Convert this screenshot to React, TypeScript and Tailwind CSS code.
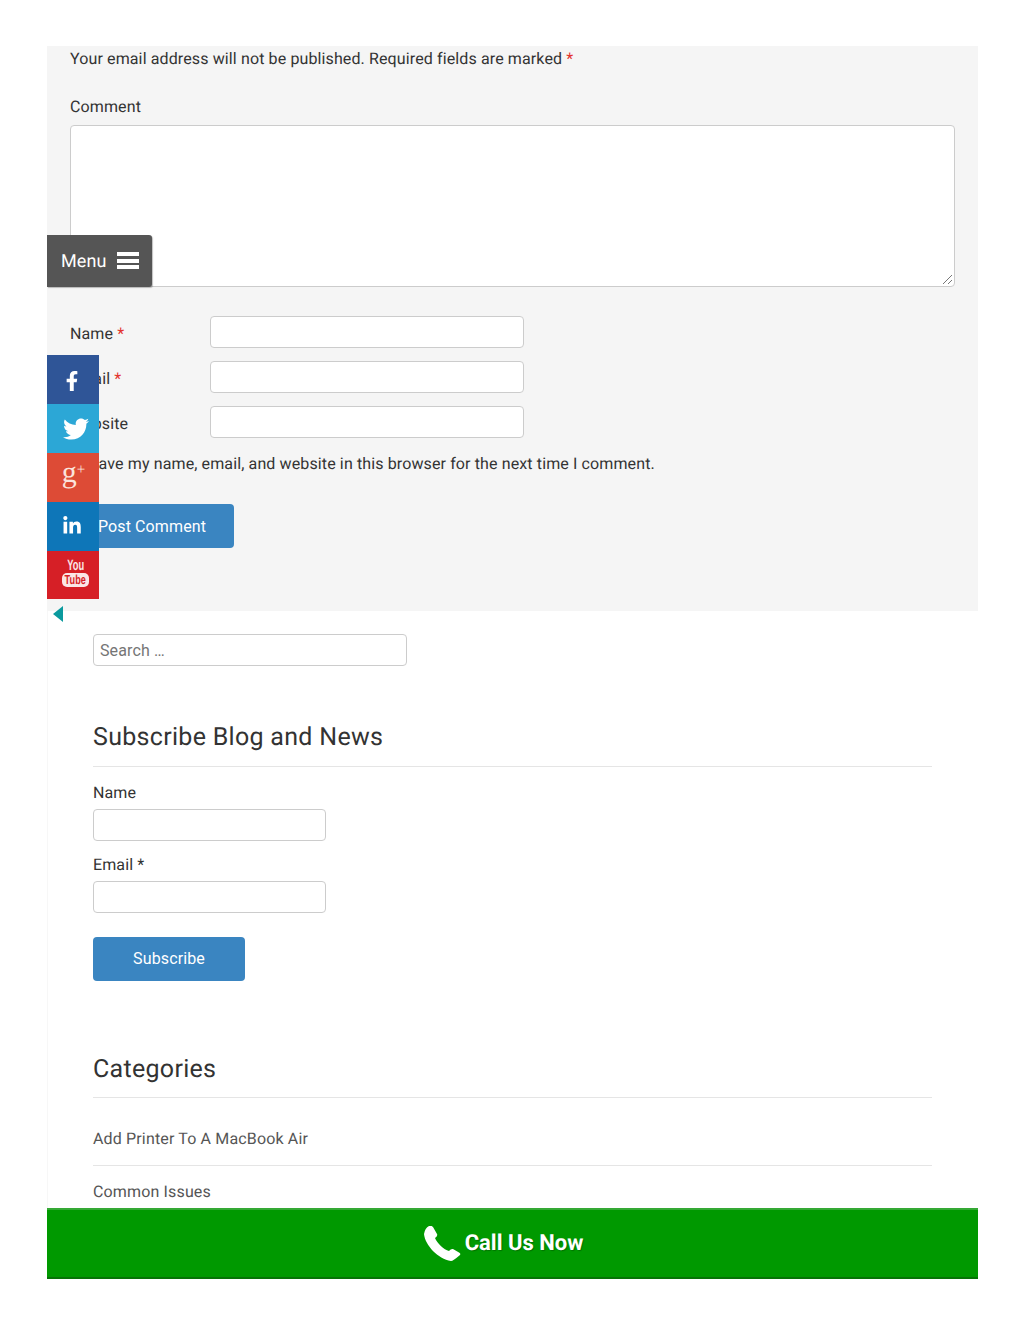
import { FaFacebookF, FaLinkedinIn, FaTwitter } from 'react-icons/fa'

const fieldClass = 'block h-8 rounded-[4px] border border-[#ccc] bg-white'

function Required() {
  return <span className="text-[#e3342f]">*</span>
}

function CommentRow({ label, top }: { label: React.ReactNode; top: string }) {
  return (
    <div className={`flex items-center ${top}`}>
      <label className="w-[140px] pt-[3px]">{label}</label>
      <input className={`${fieldClass} w-[314px]`} />
    </div>
  )
}

function SocialBar() {
  return (
    <div className="absolute left-[47px] top-[355px] w-[52px] text-white">
      <div className="flex h-[49px] items-center justify-center bg-[#2f5597] pr-[3px] pt-[2px] text-[20px]">
        <FaFacebookF />
      </div>
      <div className="flex h-[49px] items-center justify-center bg-[#2ca7d6] pl-[5px] text-[26px]">
        <FaTwitter />
      </div>
      <div className="flex h-[49px] items-start justify-center bg-[#dd4b36] pl-px font-['Liberation_Serif',serif] text-[#fbe3dc]">
        <span className="mt-[4px] text-[30px] leading-[32px]">g</span>
        <span className="mt-[7px] text-[15px] leading-[20px]">+</span>
      </div>
      <div className="flex h-[49px] items-center justify-center bg-[#0e76b8] pb-px pr-[2px] text-[20px]">
        <FaLinkedinIn />
      </div>
      <div className="flex h-[48px] flex-col items-center justify-center bg-[#d61f26] pb-[5px] pl-[5px] font-['Liberation_Sans',sans-serif] font-bold">
        <span className="scale-x-[0.62] text-[15px] leading-[14px] text-[#fbe6e6]">You</span>
        <span className="flex h-[14px] w-[27px] items-center justify-center rounded-[5px] bg-[#fbe6e6] text-[13px] text-[#d61f26]">
          <span className="scale-x-[0.7]">Tube</span>
        </span>
      </div>
      <svg className="ml-[6px] mt-[7px] h-4 w-[10px]" viewBox="0 0 10 16">
        <path d="M10 0v16L0 8z" fill="#0b9a9e" />
      </svg>
    </div>
  )
}

export default function App() {
  return (
    <div className="relative h-[1325px] overflow-hidden bg-white font-['Roboto',sans-serif] text-base tracking-[0.12px] text-[#333] [text-rendering:geometricPrecision]">
      <div className="absolute left-[47px] top-[611px] h-[600px] w-px bg-[#f7f7f7]" />
      <div className="mx-[46px] pt-[46px] pl-px">
        <section className="h-[565px] bg-[#f5f5f5] pl-[23px] pr-[23px]">
          <p className="pt-px leading-6">
            Your email address will not be published. Required fields are marked <Required />
          </p>
          <label className="mt-6 block leading-6">Comment</label>
          <div className="relative mt-[6px] h-[162px] rounded-[4px] border border-[#ccc] bg-white">
            <svg className="absolute bottom-[1px] right-[1px] h-[11px] w-[11px]" viewBox="0 0 11 11">
              <path d="M1 10 10 1M6 10l4-4" stroke="#777" strokeWidth="1" fill="none" />
            </svg>
          </div>
          <CommentRow label={<>Name <Required /></>} top="mt-[29px]" />
          <CommentRow label={<>Email <Required /></>} top="mt-[13px]" />
          <CommentRow label="Website" top="mt-[13px]" />
          <div className="mt-[13px] flex items-center gap-[6px] leading-6">
            <input type="checkbox" className="h-[13px] w-[13px]" />
            <span className="pt-px">Save my name, email, and website in this browser for the next time I comment.</span>
          </div>
          <button className="mt-[28px] block h-11 w-[164px] rounded-[4px] bg-[#3a85c1] pt-px text-white">
            Post Comment
          </button>
        </section>

        <section className="px-[46px]">
          <input
            placeholder="Search …"
            className="mt-[23px] block h-8 w-[314px] rounded-[4px] border border-[#ccc] bg-white px-1.5 placeholder:text-[#757575]"
          />
          <h2 className="mt-[54px] border-b border-[#e5e5e5] pb-[10px] text-[25px] leading-[36px] tracking-[0.3px]">
            Subscribe Blog and News
          </h2>
          <label className="mt-[14px] block leading-6">Name</label>
          <input className={`${fieldClass} mt-[4px] w-[233px]`} />
          <label className="mt-[12px] block leading-6">Email *</label>
          <input className={`${fieldClass} mt-[4px] w-[233px]`} />
          <button className="mt-6 block h-11 w-[152px] rounded-[4px] bg-[#3a85c1] text-white">Subscribe</button>
          <h2 className="mt-[71px] border-b border-[#e5e5e5] pb-[9px] text-[25px] leading-[36px] tracking-[0.3px]">Categories</h2>
          <ul className="tracking-[0.15px] text-[#555]">
            <li className="border-b border-[#e5e5e5] pb-[14px] pt-[29px] leading-6">Add Printer To A MacBook Air</li>
            <li className="pt-[14px] leading-6">Common Issues</li>
          </ul>
        </section>
      </div>

      <div className="absolute left-[47px] top-[235px] flex h-[52px] w-[105px] items-center gap-[10px] rounded-r-[3px] bg-[#555] pl-[14px] text-[18px] text-white shadow-[1px_1px_1px_rgba(0,0,0,0.25)]">
        Menu
        <span className="mb-[1px] flex w-[22px] flex-col gap-[2.5px]">
          <span className="h-[4px] bg-white" />
          <span className="h-[4px] bg-white" />
          <span className="h-[4px] bg-white" />
        </span>
      </div>

      <SocialBar />

      <div className="absolute left-[47px] top-[1208px] flex h-[71px] w-[931px] items-center justify-center gap-[4px] border-y-2 border-t-[#35a935] border-b-[#067306] bg-[#009900] pr-[18px] text-[22px] font-bold tracking-normal text-white [text-shadow:1px_1px_1px_rgba(0,0,0,0.25)]">
        <svg className="h-9 w-[37px]" viewBox="0 0 37 36" fill="currentColor">
          <path d="M5 0Q1 2 0 8C1 19 14 33 27 35Q29 35 36 29Q37 27.5 35 26.5L29 23Q27 22.5 25 25C20 24 13 17 11 12Q14 10 13 8L9 1Q7-1 5 0Z" />
        </svg>
        Call Us Now
      </div>
    </div>
  )
}
